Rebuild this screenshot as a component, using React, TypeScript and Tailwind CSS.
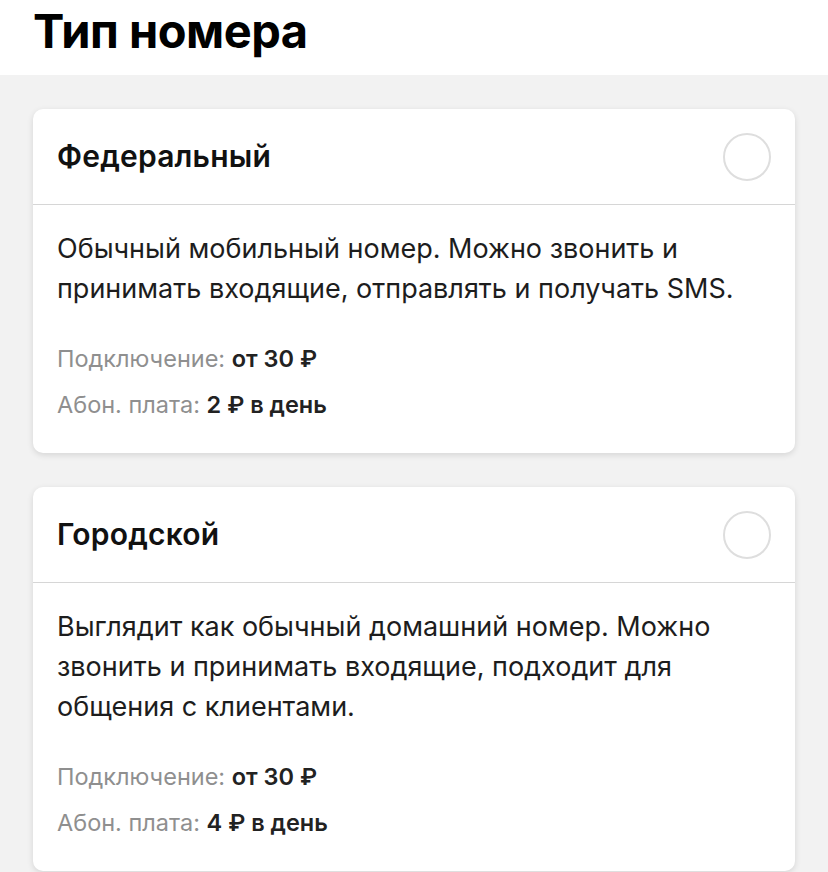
import React from 'react'

type NumberTypeProps = {
  title: string
  description: string
  connection: string
  fee: string
}

function NumberTypeCard(props: NumberTypeProps) {
  return (
    <div className="bg-white rounded-[10px] shadow-[0_2px_6px_rgba(0,0,0,0.12)]">
      <div className="h-[96px] pl-[24px] pr-[24px] flex items-center justify-between border-b border-[#d6d6d6]">
        <span className="text-[30px] font-semibold text-[#111] tracking-[0.2px]">{props.title}</span>
        <span className="w-[48px] h-[48px] rounded-full border-[2px] border-[#dedede]"></span>
      </div>
      <div className="px-[24px] pt-[24px] pb-[32px]">
        <p className="text-[27px] leading-[40px] text-[#1d1d1d]">{props.description}</p>
        <div className="mt-[34px] flex flex-col gap-[14px] text-[23.5px] leading-[32px]">
          <div>
            <span className="text-[#8f8f8f]">Подключение: </span>
            <span className="font-semibold text-[#222]">{props.connection}</span>
          </div>
          <div>
            <span className="text-[#8f8f8f]">Абон. плата: </span>
            <span className="font-semibold text-[#222]">{props.fee}</span>
          </div>
        </div>
      </div>
    </div>
  )
}

export default function App() {
  return (
    <div className="min-h-screen bg-[#f2f2f2] font-['Inter',_'Noto_Sans',_sans-serif]">
      <div className="bg-white h-[75px] px-[33px] pb-[14px] flex items-center">
        <h1 className="text-[47px] leading-[56px] font-bold text-black tracking-[-0.5px]">Тип номера</h1>
      </div>
      <div className="px-[33px] pt-[34px] pb-[20px] flex flex-col gap-[34px]">
        <NumberTypeCard
          title="Федеральный"
          description="Обычный мобильный номер. Можно звонить и принимать входящие, отправлять и получать SMS."
          connection="от 30 ₽"
          fee="2 ₽ в день"
        />
        <NumberTypeCard
          title="Городской"
          description="Выглядит как обычный домашний номер. Можно звонить и принимать входящие, подходит для общения с клиентами."
          connection="от 30 ₽"
          fee="4 ₽ в день"
        />
      </div>
    </div>
  )
}
